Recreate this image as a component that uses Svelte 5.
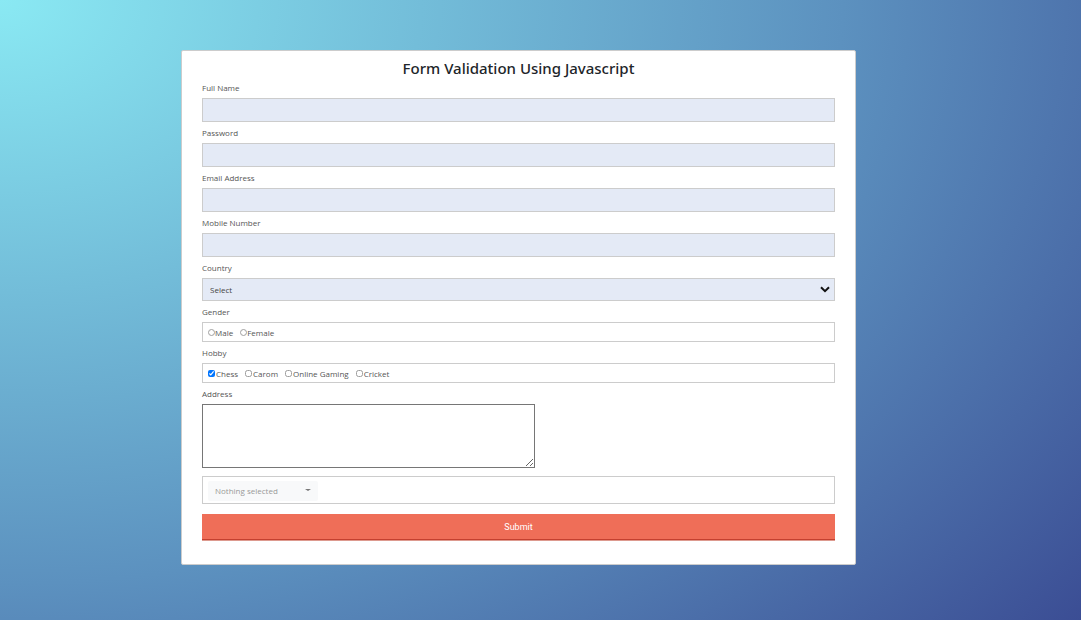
<script>
  const fields = [
    { id: 'name', label: 'Full Name', type: 'text' },
    { id: 'password', label: 'Password', type: 'password' },
    { id: 'email', label: 'Email Address', type: 'email' },
    { id: 'mobile', label: 'Mobile Number', type: 'tel' },
  ];
  const genders = ['Male', 'Female'];
  const hobbies = ['Chess', 'Carom', 'Online Gaming', 'Cricket'];
</script>

<main>
  <form onsubmit={(e) => e.preventDefault()}>
    <h1>Form Validation Using Javascript</h1>

    {#each fields as f}
      <label class="caption" for={f.id}>{f.label}</label>
      <input class="field" id={f.id} type={f.type} autocomplete="off" />
    {/each}

    <label class="caption" for="country">Country</label>
    <div class="select-wrap">
      <select class="field" id="country"><option>Select</option></select>
      <svg width="10" height="7" viewBox="0 0 10 7" aria-hidden="true">
        <path d="M1 1.2 5 5.2 9 1.2" fill="none" stroke="#111" stroke-width="2" />
      </svg>
    </div>

    <div class="caption" id="gender">Gender</div>
    <div class="group" role="radiogroup" aria-labelledby="gender">
      {#each genders as g}
        <label class="choice radio"><input type="radio" name="gender" value={g} /><span>{g}</span></label>
      {/each}
    </div>

    <div class="caption" id="hobby">Hobby</div>
    <div class="group" role="group" aria-labelledby="hobby">
      {#each hobbies as h, i}
        <label class="choice"><input type="checkbox" value={h} checked={i === 0} /><span>{h}</span></label>
      {/each}
    </div>

    <label class="caption" for="address">Address</label>
    <textarea id="address"></textarea>

    <div class="group picker">
      <button class="dropdown" type="button">Nothing selected<i></i></button>
    </div>

    <button class="submit" type="submit">Submit</button>
  </form>
</main>

<style>
  :global(body) {
    margin: 0;
    font-family: 'Open Sans', 'Noto Sans', sans-serif;
  }
  * {
    box-sizing: border-box;
  }
  main {
    min-height: 100vh;
    padding: 50px 225px 55px 181px;
    background: radial-gradient(130% 157% at 0 0, #8ae9f3, #5c91bf 60%, #3b4d94);
  }
  form {
    display: flex;
    flex-direction: column;
    padding: 6px 20px 23px;
    border: 1px solid #ccc;
    border-radius: 2px;
    background: #fff;
    color: #555;
    font-size: 8px;
  }
  h1 {
    margin: 0 0 2px;
    color: #212529;
    font: 500 15px/22px 'Noto Sans', sans-serif;
    text-align: center;
  }
  .caption {
    height: 17px;
    line-height: 14px;
  }
  .field {
    display: block;
    width: 100%;
    height: 24px;
    margin: 0 0 4px;
    padding: 0 7px;
    border: 1px solid #ccc;
    border-radius: 0;
    background: #e4eaf6;
    color: #444;
    font: inherit;
    appearance: none;
  }
  .select-wrap {
    display: grid;
    align-items: center;
  }
  .select-wrap > * {
    grid-area: 1 / 1;
  }
  .select-wrap .field {
    height: 23px;
  }
  .select-wrap svg {
    justify-self: end;
    margin: 0 5px 5px 0;
    pointer-events: none;
  }
  .group {
    display: flex;
    align-items: center;
    gap: 7px;
    height: 20px;
    margin-bottom: 4px;
    padding: 0 5px;
    border: 1px solid #ccc;
  }
  .choice {
    display: flex;
    align-items: center;
    gap: 1px;
    line-height: 12px;
  }
  .choice span {
    padding-top: 2px;
  }
  .radio {
    gap: 0;
  }
  .choice input {
    width: 7px;
    height: 7px;
    margin: 0;
  }
  .choice input:not(:checked) {
    opacity: 0.7;
  }
  textarea {
    width: 333px;
    max-width: 100%;
    height: 64px;
    margin: 0 0 8px;
    border: 1px solid #767676;
    border-radius: 0;
    font: inherit;
  }
  .picker {
    height: 28px;
    margin-bottom: 10px;
    padding-top: 2px;
  }
  .dropdown {
    display: flex;
    align-items: center;
    justify-content: space-between;
    width: 110px;
    height: 20px;
    padding: 0 7px 2px;
    border: 0;
    border-radius: 2px;
    background: #f8f9fa;
    color: #999;
    font: inherit;
  }
  .dropdown i {
    border: solid transparent;
    border-width: 2px 3px 0;
    border-top-color: #777;
  }
  .submit {
    height: 26px;
    margin-bottom: 1px;
    border: 0;
    border-bottom: 1px solid #c4402f;
    box-shadow: 0 1px #dd9a8f;
    background: #ef6e58;
    color: #fff;
    font: 9px Roboto, sans-serif;
  }
</style>
